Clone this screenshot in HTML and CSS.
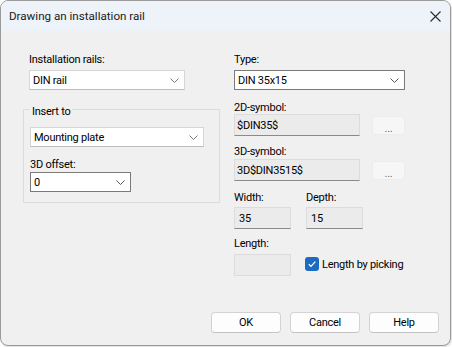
FILE: index.html
```html
<html lang="en">
    <head>
        <meta charset="UTF-8">
        <meta name="viewport" content="width=device-width, initial-scale=1.0">
        <title>Drawing an installation rail</title>
        <link rel="stylesheet" href="styles.css">
    </head>
    <body>
        <div class="dialog">
            <div class="titlebar">
                <span class="title">Drawing an installation rail</span>
                <svg class="close" width="11" height="11" viewBox="0 0 11 11">
                    <path d="M0.5 0.5 L10.5 10.5 M10.5 0.5 L0.5 10.5" stroke="#2b2b2b" stroke-width="1.1" fill="none"/>
                </svg>
            </div>

            <div class="content">
                <div class="columns">
                    <div class="col-left">
                        <div class="top">
                            <label class="lbl">Installation rails:</label>
                            <div class="combo w-rails">
                                <span>DIN rail</span>
                                <svg class="chev" width="9" height="5" viewBox="0 0 9 5"><path d="M0.5 0.5 L4.5 4.5 L8.5 0.5" fill="none" stroke="#777" stroke-width="1"/></svg>
                            </div>
                        </div>

                        <fieldset class="group">
                            <legend>Insert to</legend>
                            <div class="combo w-plate">
                                <span>Mounting plate</span>
                                <svg class="chev" width="9" height="5" viewBox="0 0 9 5"><path d="M0.5 0.5 L4.5 4.5 L8.5 0.5" fill="none" stroke="#777" stroke-width="1"/></svg>
                            </div>
                            <label class="lbl lbl-offset">3D offset:</label>
                            <div class="combo dark w-offset">
                                <span>0</span>
                                <svg class="chev" width="9" height="5" viewBox="0 0 9 5"><path d="M0.5 0.5 L4.5 4.5 L8.5 0.5" fill="none" stroke="#555" stroke-width="1"/></svg>
                            </div>
                        </fieldset>
                    </div>

                    <div class="col-right">
                        <label class="lbl">Type:</label>
                        <div class="combo dark w-type">
                            <span>DIN 35x15</span>
                            <svg class="chev" width="9" height="5" viewBox="0 0 9 5"><path d="M0.5 0.5 L4.5 4.5 L8.5 0.5" fill="none" stroke="#555" stroke-width="1"/></svg>
                        </div>

                        <label class="lbl lbl-2d">2D-symbol:</label>
                        <div class="row">
                            <div class="field w-sym">$DIN35$</div>
                            <button class="dots" type="button">...</button>
                        </div>

                        <label class="lbl lbl-3d">3D-symbol:</label>
                        <div class="row row-3d">
                            <div class="field w-sym">3D$DIN3515$</div>
                            <button class="dots" type="button">...</button>
                        </div>

                        <div class="pair">
                            <div>
                                <label class="lbl">Width:</label>
                                <div class="field num w-small">35</div>
                            </div>
                            <div>
                                <label class="lbl">Depth:</label>
                                <div class="field num w-small">15</div>
                            </div>
                        </div>

                        <label class="lbl lbl-length">Length:</label>
                        <div class="row row-length">
                            <div class="field disabled w-small"></div>
                            <label class="check">
                                <span class="box">
                                    <svg width="10" height="10" viewBox="0 0 10 10"><path d="M1.8 5.2 L4 7.4 L8.3 2.6" fill="none" stroke="#fff" stroke-width="1.3"/></svg>
                                </span>
                                Length by picking
                            </label>
                        </div>
                    </div>
                </div>

                <div class="buttons">
                    <button type="button">OK</button>
                    <button type="button">Cancel</button>
                    <button type="button">Help</button>
                </div>
            </div>
        </div>
    </body>
</html>
```

FILE: styles.css
```css
* {
    margin: 0;
    padding: 0;
    box-sizing: border-box;
}

body {
    background-color: #fff;
    font-family: Roboto, "Liberation Sans", sans-serif;
    font-size: 11px;
    letter-spacing: -0.25px;
    color: #000;
}

button {
    font-family: inherit;
    font-size: inherit;
    letter-spacing: inherit;
    color: #000;
}

.dialog {
    width: 451px;
    height: 346px;
    border: 1px solid #9a9a9a;
    border-radius: 8px;
    background-color: #f0f0f0;
    display: flex;
    flex-direction: column;
    overflow: hidden;
    box-shadow: 1px 1px 2px rgba(0, 0, 0, 0.15);
}

.titlebar {
    height: 30px;
    background-color: #eef3f9;
    display: flex;
    align-items: center;
    justify-content: space-between;
    padding: 0 9px 0 8px;

    .title {
        font-size: 11.6px;
        letter-spacing: 0;
        color: #1a1a1a;
    }
}

.content {
    flex: 1;
    display: flex;
    flex-direction: column;
    padding: 22px 11px 12px 0;
}

.columns {
    display: flex;
}

.col-left {
    margin-left: 22px;
    width: 197px;

    .top {
        padding-left: 6px;
    }
}

.col-right {
    margin-left: 14px;
    width: 171px;
}

.lbl {
    display: block;
    line-height: 13px;
}

.combo {
    display: flex;
    align-items: center;
    justify-content: space-between;
    height: 20px;
    margin-top: 4px;
    padding: 0 5px 0 3px;
    background-color: #fff;
    border: 1px solid #d6d6d6;
    border-bottom-color: #bcbcbc;
}

.combo.dark {
    border-color: #7a7a7a;
}

.w-rails { width: 156px; }
.w-plate { width: 174px; margin-top: 0; }
.w-offset { width: 101px; margin-top: 1px; }
.w-type { width: 171px; }

.group {
    margin-top: 11px;
    width: 197px;
    border: 1px solid #dcdcdc;
    padding: 9px 6px 10px 6px;

    legend {
        padding: 4px 2px 0;
        line-height: 13px;
    }
}

.lbl-offset { margin-top: 11px; }
.lbl-2d { margin-top: 11px; }
.lbl-3d { margin-top: 9px; }
.lbl-length { margin-top: 8px; }

.row {
    display: flex;
    align-items: center;
}

.row-3d { margin-top: 1px; }
.row-length { margin-top: 4px; }

.field {
    height: 22px;
    display: flex;
    align-items: center;
    padding-left: 2px;
    background-color: #ebebeb;
    border: 1px solid #dcdcdc;
    border-bottom-color: #8a8a8a;
}

.field.num {
    padding-left: 4px;
    margin-top: 3px;
}

.field.disabled {
    border-bottom-color: #dcdcdc;
}

.w-sym { width: 126px; }
.w-small { width: 57px; }

.dots {
    width: 33px;
    height: 19px;
    margin-left: 12px;
    background-color: #f6f6f6;
    border: 1px solid #ececec;
    border-radius: 3px;
    color: #6a6a6a;
    line-height: 19px;
    padding-top: 2px;
}

.pair {
    display: flex;
    gap: 15px;
    margin-top: 10px;
}

.check {
    display: flex;
    align-items: center;
    margin-left: 14px;
    margin-top: -2px;

    .box {
        width: 14px;
        height: 14px;
        margin-right: 3px;
        border-radius: 3px;
        background-color: #1c6bc3;
        display: flex;
        align-items: center;
        justify-content: center;
    }
}

.buttons {
    margin-top: auto;
    display: flex;
    justify-content: flex-end;
    gap: 9px;

    button {
        width: 70px;
        height: 21px;
        background-color: #fdfdfd;
        border: 1px solid #d3d3d3;
        border-bottom-color: #c4c4c4;
        border-radius: 4px;
    }
}
```
